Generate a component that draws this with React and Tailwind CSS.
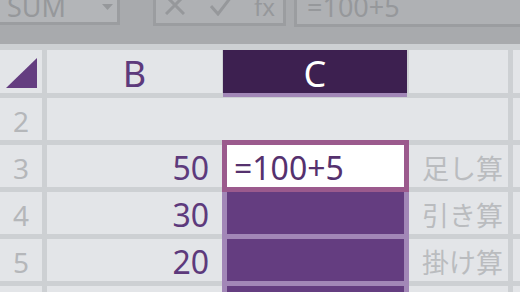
export default function App() {
  const font = "font-['Noto_Sans','Noto_Sans_CJK_JP',sans-serif]";
  const rowNum = 'flex items-center justify-center bg-[#e3e5e8] pt-[3px] text-[28px] leading-none text-[#b5b7ba]';
  const bVal = 'flex items-center justify-end bg-[#e3e5e8] pr-[13px] pt-[3px] text-[32px] leading-none text-[#5d3a7c]';
  const dVal = "flex items-center justify-end bg-[#e3e5e8] pr-[5px] pt-[3px] text-[27px] leading-none text-[#babcbf] font-['Noto_Sans_CJK_JP',sans-serif]";
  const selCell = '-mx-[5px] -mb-[5px] border-x-[5px] border-b-[5px] border-[#a287b7] bg-[#643d80]';

  return (
    <div className={`w-[520px] h-[292px] overflow-hidden bg-[#cdd0d3] ${font}`}>
      {/* formula bar */}
      <div className="flex h-[44px] items-start bg-[#a8aaad]">
        <div className="-ml-[3px] flex h-[25px] w-[123px] border-[3px] border-t-0 border-[#9b9da0] bg-[#b3b5b8]">
          <span className="-mt-[7px] ml-[7px] text-[27px] leading-none text-[#96989b]">SUM</span>
          <svg className="ml-[36px] mt-[4px]" width="11" height="6" viewBox="0 0 11 6">
            <polygon points="0,0 11,0 5.5,6" fill="#96989b" />
          </svg>
        </div>
        <div className="ml-[33px] flex h-[26px] w-[133px] items-start border-[3px] border-t-0 border-[#9b9da0] bg-[#afb1b4]">
          <svg className="ml-[9px] -mt-[5px]" width="20" height="20" viewBox="0 0 20 20">
            <path d="M1 1 L19 19 M19 1 L1 19" stroke="#96989b" strokeWidth="3" fill="none" />
          </svg>
          <svg className="ml-[25px] -mt-[4px]" width="22" height="20" viewBox="0 0 22 20">
            <path d="M1 10 L8 18 L21 1" stroke="#96989b" strokeWidth="3" fill="none" />
          </svg>
          <span className="-mt-[5px] ml-[22px] text-[24px] leading-none text-[#96989b]">fx</span>
        </div>
        <div className="-mr-[10px] ml-[8px] flex h-[27px] flex-1 border-[3px] border-t-0 border-[#9b9da0] bg-[#afb1b4]">
          <span className="-mt-[7px] ml-[10px] text-[27px] leading-none text-[#96989b]">=100+5</span>
        </div>
      </div>

      {/* sheet */}
      <div className="grid grid-cols-[42px_175px_177px_99px_1fr] grid-rows-[43px_42px_42px_42px_42px_42px] gap-[5px] pt-[6px]">
        {/* header row */}
        <div className="bg-[#e3e5e8]">
          <svg width="42" height="43" viewBox="0 0 42 43">
            <polygon points="6,38 37,8 37,38" fill="#643d80" />
          </svg>
        </div>
        <div className="flex items-center justify-center bg-[#e3e5e8] pt-[4px] text-[36px] leading-none text-[#5d3a7c]">B</div>
        <div className="-mb-[4px] -ml-[4px] -mr-[3px] flex items-center justify-center border-b-[4px] border-[#a287b7] bg-[#3d2050] pt-[4px] text-[36px] leading-none text-white">
          C
        </div>
        <div className="bg-[#e3e5e8]" />
        <div className="bg-[#e3e5e8]" />

        {/* row 2 */}
        <div className={rowNum}>2</div>
        <div className="col-span-3 bg-[#e3e5e8]" />
        <div className="bg-[#e3e5e8]" />

        {/* row 3 */}
        <div className={rowNum}>3</div>
        <div className={bVal}>50</div>
        <div className="-m-[5px] flex items-center border-[5px] border-[#9b5a8d] bg-white pl-[7px] pt-[3px] text-[32px] leading-none text-[#55316e]">
          =100+5
        </div>
        <div className={dVal}>足し算</div>
        <div className="bg-[#e3e5e8]" />

        {/* row 4 */}
        <div className={rowNum}>4</div>
        <div className={bVal}>30</div>
        <div className={selCell} />
        <div className={dVal}>引き算</div>
        <div className="bg-[#e3e5e8]" />

        {/* row 5 */}
        <div className={rowNum}>5</div>
        <div className={bVal}>20</div>
        <div className={selCell} />
        <div className={dVal}>掛け算</div>
        <div className="bg-[#e3e5e8]" />

        {/* row 6, mostly below the fold */}
        <div className="bg-[#e3e5e8]" />
        <div className="bg-[#e3e5e8]" />
        <div className={selCell} />
        <div className="bg-[#e3e5e8]" />
        <div className="bg-[#e3e5e8]" />
      </div>
    </div>
  );
}
